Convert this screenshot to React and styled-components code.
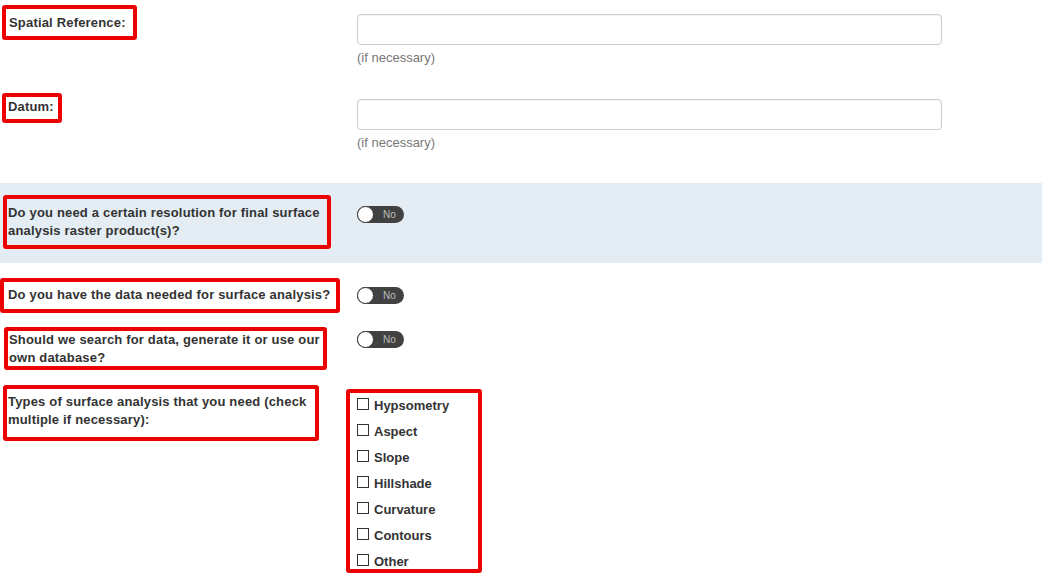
import React from "react";
import styled, { createGlobalStyle } from "styled-components";

const GlobalStyle = createGlobalStyle`
  body {
    margin: 0;
    background: #fff;
    font-family: "Liberation Sans", Arial, sans-serif;
    color: #333;
  }
`;

const Page = styled.div`
  width: 1042px;
  display: flex;
  flex-direction: column;
`;

const Row = styled.div`
  display: flex;
  align-items: flex-start;
  height: ${(p) => p.$h}px;
  background: ${(p) => (p.$shade ? "#e4edf3" : "transparent")};
`;

const LabelCell = styled.div`
  width: 346px;
  flex-shrink: 0;
`;

const Control = styled.div`
  display: flex;
  flex-direction: column;
  padding-left: ${(p) => (p.$inset === undefined ? 11 : p.$inset)}px;
  margin-top: ${(p) => p.$top}px;
`;

// red annotation box drawn round a field
const Callout = styled.div`
  box-sizing: border-box;
  width: ${(p) => p.$w}px;
  height: ${(p) => p.$h}px;
  margin: ${(p) => p.$top}px 0 0 ${(p) => p.$left}px;
  padding: ${(p) => p.$pt}px 0 0 ${(p) => p.$pl}px;
  border: 4px solid #ec0000;
  border-radius: 3px;
`;

const Label = styled.div`
  width: 330px;
  font-size: 13px;
  font-weight: bold;
  line-height: 18px;
  letter-spacing: 0.18px;
  color: #333;
`;

const Input = styled.input`
  box-sizing: border-box;
  width: 585px;
  height: 31px;
  border: 1px solid #ccc;
  border-radius: 4px;
  box-shadow: inset 0 1px 1px rgba(0, 0, 0, 0.05);
  background: #fff;
  outline: none;
`;

const Hint = styled.span`
  margin-top: 4px;
  font-size: 13px;
  line-height: 17px;
  color: #777;
`;

const Toggle = styled.div`
  box-sizing: border-box;
  width: 47px;
  height: 17px;
  border-radius: 9px;
  background: #414141;
  display: flex;
  align-items: center;
`;

const Knob = styled.span`
  box-sizing: border-box;
  width: 17px;
  height: 17px;
  border-radius: 50%;
  background: #fff;
  border: 1px solid #3a3a3a;
`;

const ToggleText = styled.span`
  margin-left: 9px;
  font-size: 10px;
  color: #bdbdbd;
`;

const CheckList = styled.div`
  display: flex;
  flex-direction: column;
`;

const CheckItem = styled.label`
  display: flex;
  align-items: flex-start;
  height: 26px;
  font-size: 13px;
  font-weight: bold;
  line-height: 18px;
  color: #333;
`;

const Box = styled.input`
  appearance: none;
  box-sizing: border-box;
  width: 12px;
  height: 12px;
  margin: 1px 5px 0 0;
  border: 1px solid #333;
  background: #fff;
`;

const analyses = [
  "Hypsometry",
  "Aspect",
  "Slope",
  "Hillshade",
  "Curvature",
  "Contours",
  "Other",
];

const Switch = () => (
  <Toggle>
    <Knob />
    <ToggleText>No</ToggleText>
  </Toggle>
);

export default function App() {
  return (
    <Page>
      <GlobalStyle />

      <Row $h={85}>
        <LabelCell>
          <Callout $w={135} $h={35} $top={5} $left={2} $pt={5} $pl={3}>
            <Label>Spatial Reference:</Label>
          </Callout>
        </LabelCell>
        <Control $top={14}>
          <Input type="text" />
          <Hint>(if necessary)</Hint>
        </Control>
      </Row>

      <Row $h={98}>
        <LabelCell>
          <Callout $w={60} $h={30} $top={8} $left={2} $pt={1} $pl={2}>
            <Label>Datum:</Label>
          </Callout>
        </LabelCell>
        <Control $top={14}>
          <Input type="text" />
          <Hint>(if necessary)</Hint>
        </Control>
      </Row>

      <Row $h={80} $shade>
        <LabelCell>
          <Callout $w={328} $h={54} $top={12} $left={3} $pt={5} $pl={1}>
            <Label>
              Do you need a certain resolution for final surface analysis
              raster product(s)?
            </Label>
          </Callout>
        </LabelCell>
        <Control $top={23}>
          <Switch />
        </Control>
      </Row>

      <Row $h={56}>
        <LabelCell>
          <Callout $w={340} $h={35} $top={15} $left={0} $pt={4} $pl={4}>
            <Label>Do you have the data needed for surface analysis?</Label>
          </Callout>
        </LabelCell>
        <Control $top={24}>
          <Switch />
        </Control>
      </Row>

      <Row $h={58}>
        <LabelCell>
          <Callout $w={323} $h={43} $top={8} $left={4} $pt={0} $pl={1}>
            <Label>
              Should we search for data, generate it or use our own database?
            </Label>
          </Callout>
        </LabelCell>
        <Control $top={12}>
          <Switch />
        </Control>
      </Row>

      <Row $h={200}>
        <LabelCell>
          <Callout $w={316} $h={56} $top={8} $left={3} $pt={4} $pl={1}>
            <Label>
              Types of surface analysis that you need (check multiple if
              necessary):
            </Label>
          </Callout>
        </LabelCell>
        <Control $top={12} $inset={0}>
          <Callout $w={136} $h={184} $top={0} $left={0} $pt={4} $pl={7}>
            <CheckList>
              {analyses.map((name) => (
                <CheckItem key={name}>
                  <Box type="checkbox" />
                  {name}
                </CheckItem>
              ))}
            </CheckList>
          </Callout>
        </Control>
      </Row>
    </Page>
  );
}
